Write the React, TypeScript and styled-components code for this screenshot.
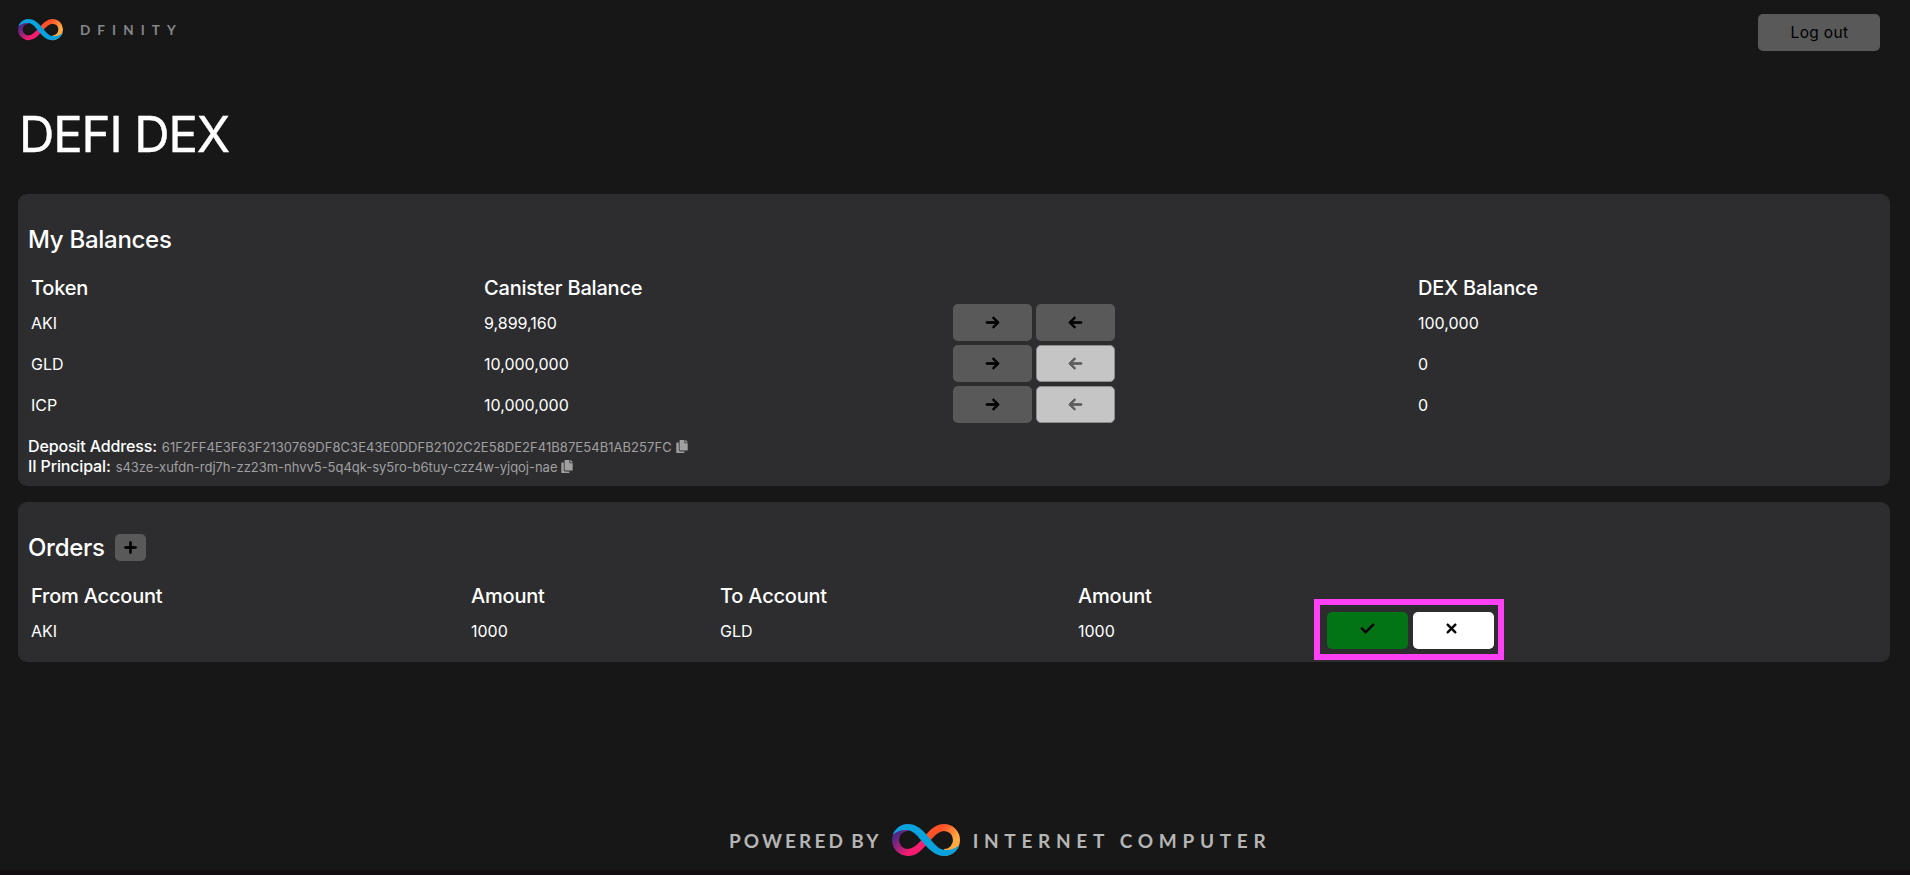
import React from 'react';
import styled, { createGlobalStyle } from 'styled-components';
import { FaArrowLeft, FaArrowRight, FaCheck, FaPlus, FaXmark } from 'react-icons/fa6';
import { FaCopy } from 'react-icons/fa';

const GlobalStyle = createGlobalStyle`
  *, *::before, *::after { box-sizing: border-box; }
  body {
    margin: 0;
    background: #171717;
    color: #fff;
    font-family: Inter, "Liberation Sans", sans-serif;
    font-optical-sizing: none;
    font-size: 16px;
    font-weight: 400;
  }
  button { font: inherit; color: #000; }
`;

const Page = styled.div`
  height: 875px;
  display: flex;
  flex-direction: column;
  padding: 0 20px 0 18px;
  border-bottom: 5px solid #110d10;
  overflow: hidden;
`;

const Header = styled.header`
  display: flex;
  justify-content: space-between;
  align-items: flex-start;
  height: 96px;
  padding: 14px 10px 0 0;
`;

const Brand = styled.div`
  display: flex;
  align-items: center;
  gap: 17px;
  padding-top: 5px;
`;

const BrandName = styled.span`
  font-family: Lato, sans-serif;
  font-size: 13.5px;
  font-weight: 700;
  line-height: 22px;
  letter-spacing: 7.1px;
  color: #85868a;
`;

const Button = styled.button<{ $width: number; $height?: number; $tone?: string }>`
  display: inline-flex;
  align-items: center;
  justify-content: center;
  width: ${p => p.$width}px;
  height: ${p => p.$height ?? 37}px;
  padding: 0;
  border: 0;
  border-radius: 5px;
  background: ${p => p.$tone ?? '#595959'};

  svg {
    stroke: currentColor;
    stroke-width: 26px;
    width: 15px;
    height: 15px;
    overflow: visible;
  }

  &:disabled {
    background: #c5c5c5;
    border: 1px solid #8d8d8d;
    color: #5c5c5c;
  }
`;

const LogoutButton = styled(Button)`
  padding-left: 1px;
  font-size: 15.5px;
  letter-spacing: 0.35px;
`;

const OrderButton = styled(Button)`
  padding-bottom: 4px;
`;

const CancelButton = styled(OrderButton)`
  padding-right: 5px;
`;

const Title = styled.h1`
  margin: 0 0 29px 1px;
  height: 69px;
  line-height: 77px;
  font-size: 49px;
  font-weight: 400;
  letter-spacing: -1.1px;
  -webkit-text-stroke: 0.4px #fff;
`;

const Panel = styled.section<{ $height: number }>`
  height: ${p => p.$height}px;
  flex: none;
  margin-bottom: 16px;
  padding: 27px 10px 0;
  border-radius: 9px;
  background: #2d2d2f;
`;

const PanelHeading = styled.div`
  display: flex;
  align-items: center;
  gap: 10px;
  height: 36px;
  margin-bottom: 14px;
`;

const PanelTitle = styled.h2`
  margin: 0;
  font-size: 24px;
  font-weight: 500;
  letter-spacing: -0.28px;
`;

const Row = styled.div<{ $columns: string; $height: number }>`
  display: grid;
  grid-template-columns: ${p => p.$columns};
  align-items: center;
  height: ${p => p.$height}px;
  padding-left: 3px;
`;

const HeadRow = styled(Row)`
  padding-top: 2px;
  font-size: 20px;
  font-weight: 500;
  letter-spacing: -0.2px;
`;

const Actions = styled.div`
  display: flex;
  gap: 4px;
`;

const AccountInfo = styled.div`
  margin-top: 11px;
`;

const InfoLine = styled.div`
  display: flex;
  align-items: center;
  height: 20px;
  white-space: pre;
`;

const InfoLabel = styled.span`
  font-weight: 500;
  letter-spacing: -0.15px;
  margin-right: 5px;
`;

const InfoValue = styled.span<{ $spacing: number }>`
  margin-right: 4px;
  padding-top: 1px;
  font-size: 13px;
  letter-spacing: ${p => p.$spacing}px;
  color: #a0a0a1;
`;

const CopyIcon = styled(FaCopy)`
  width: 12px;
  height: 13px;
  color: #a0a0a1;
`;

const OrderActions = styled.div`
  display: flex;
  align-items: center;
  justify-content: center;
  gap: 5px;
  width: 190px;
  height: 61px;
  margin: -13px 0 -11px;
  padding: 2px 0 0 3px;
  border: 6px solid #ff40f4;
`;

const Footer = styled.footer`
  display: flex;
  align-items: center;
  gap: 13px;
  height: 48px;
  margin-top: auto;
  margin-bottom: 6px;
  padding-left: 711px;
`;

const FooterText = styled.span<{ $spacing: number; $word?: number }>`
  font-family: Lato, sans-serif;
  font-size: 19px;
  font-weight: 700;
  letter-spacing: ${p => p.$spacing}px;
  word-spacing: ${p => p.$word ?? 0}px;
  margin-right: -${p => p.$spacing}px;
  color: #b5b5b5;
  white-space: nowrap;
`;

const Infinity = ({ id, width }: { id: string; width: number }) => (
  <svg width={width} height={(width * 32) / 68} viewBox="0 0 68 32" fill="none" strokeWidth="7">
    <defs>
      <linearGradient id={`${id}-warm`} x1="34" y1="3" x2="62" y2="26" gradientUnits="userSpaceOnUse">
        <stop offset="0.35" stopColor="#ff5229" />
        <stop offset="0.85" stopColor="#ffab42" />
      </linearGradient>
      <linearGradient id={`${id}-cool`} x1="28" y1="28" x2="5" y2="6" gradientUnits="userSpaceOnUse">
        <stop offset="0.25" stopColor="#f61d70" />
        <stop offset="0.9" stopColor="#522785" />
      </linearGradient>
    </defs>
    <path d="M34 16C40 9 45 3.5 52 3.5C59 3.5 64.5 9 64.5 16C64.5 23 59 28.5 52 28.5" stroke={`url(#${id}-warm)`} />
    <path d="M34 16C28 23 23 28.5 16 28.5C9 28.5 3.5 23 3.5 16C3.5 9 9 3.5 16 3.5" stroke={`url(#${id}-cool)`} />
    <path
      d="M.8 10.8C3 4.6 9 0 16 0C25 0 31 6.5 36.7 13.2C42 19.4 46 25 52 25.8C57 26.4 62 25.2 67.2 21.2C65 27.4 59 32 52 32C43 32 37 25.5 31.3 18.8C26 12.6 22 7 16 6.2C11 5.6 6 6.8 .8 10.8Z"
      fill="#0aa2dd"
    />
  </svg>
);

const balanceColumns = '453px 469px 465px 1fr';
const orderColumns = '440px 249px 358px 236px 1fr';

const balances = [
  { token: 'AKI', canister: '9,899,160', dex: '100,000' },
  { token: 'GLD', canister: '10,000,000', dex: '0' },
  { token: 'ICP', canister: '10,000,000', dex: '0' },
];

export default function App() {
  return (
    <Page>
      <GlobalStyle />
      <Header>
        <Brand>
          <Infinity id="brand" width={45} />
          <BrandName>DFINITY</BrandName>
        </Brand>
        <LogoutButton $width={122}>Log out</LogoutButton>
      </Header>
      <Title>DEFI DEX</Title>
      <Panel $height={292}>
        <PanelHeading>
          <PanelTitle>My Balances</PanelTitle>
        </PanelHeading>
        <HeadRow $columns={balanceColumns} $height={31}>
          <span>Token</span>
          <span>Canister Balance</span>
          <span />
          <span>DEX Balance</span>
        </HeadRow>
        {balances.map(b => (
          <Row key={b.token} $columns={balanceColumns} $height={41}>
            <span>{b.token}</span>
            <span>{b.canister}</span>
            <Actions>
              <Button $width={79}><FaArrowRight /></Button>
              <Button $width={79} disabled={b.dex === '0'}><FaArrowLeft /></Button>
            </Actions>
            <span>{b.dex}</span>
          </Row>
        ))}
        <AccountInfo>
          <InfoLine>
            <InfoLabel>Deposit Address:</InfoLabel>
            <InfoValue $spacing={0.05}>61F2FF4E3F63F2130769DF8C3E43E0DDFB2102C2E58DE2F41B87E54B1AB257FC</InfoValue>
            <CopyIcon />
          </InfoLine>
          <InfoLine>
            <InfoLabel>II Principal:</InfoLabel>
            <InfoValue $spacing={-0.02}>s43ze-xufdn-rdj7h-zz23m-nhvv5-5q4qk-sy5ro-b6tuy-czz4w-yjqoj-nae</InfoValue>
            <CopyIcon />
          </InfoLine>
        </AccountInfo>
      </Panel>
      <Panel $height={160}>
        <PanelHeading>
          <PanelTitle>Orders</PanelTitle>
          <Button $width={31} $height={27}><FaPlus /></Button>
        </PanelHeading>
        <HeadRow $columns={orderColumns} $height={31}>
          <span>From Account</span>
          <span>Amount</span>
          <span>To Account</span>
          <span>Amount</span>
        </HeadRow>
        <Row $columns={orderColumns} $height={41}>
          <span>AKI</span>
          <span>1000</span>
          <span>GLD</span>
          <span>1000</span>
          <OrderActions>
            <OrderButton $width={81} $tone="#027416"><FaCheck /></OrderButton>
            <CancelButton $width={81} $tone="#fff"><FaXmark /></CancelButton>
          </OrderActions>
        </Row>
      </Panel>
      <Footer>
        <FooterText $spacing={3.1} $word={-2.5}>POWERED BY</FooterText>
        <Infinity id="footer" width={68} />
        <FooterText $spacing={5.7}>INTERNET COMPUTER</FooterText>
      </Footer>
    </Page>
  );
}
